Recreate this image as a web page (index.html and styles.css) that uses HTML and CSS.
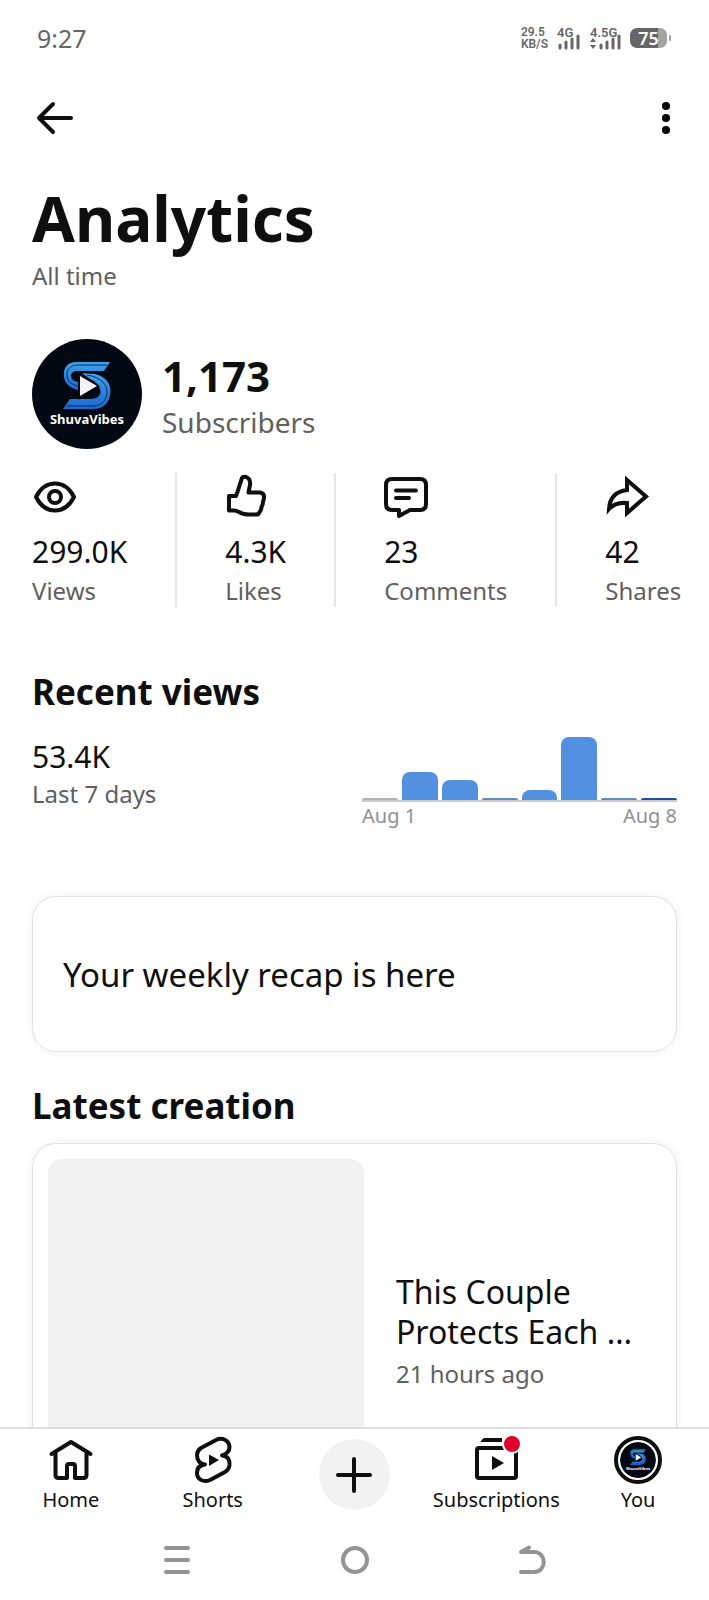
FILE: index.html
```html
<!DOCTYPE html>
<html lang="en">
<head>
	<meta charset="utf-8">
	<meta name="viewport" content="width=device-width, initial-scale=1">
	<title>Analytics</title>
	<link rel="stylesheet" href="styles.css">
</head>
<body>
	<!-- channel logo, used in the header and in the bottom bar -->
	<svg class="defs" width="0" height="0" aria-hidden="true">
		<defs>
			<linearGradient id="blue" x1="0" y1="0" x2="0" y2="1">
				<stop offset="0" stop-color="#3fa3ea"/>
				<stop offset="1" stop-color="#1c66d0"/>
			</linearGradient>
			<symbol id="logo" viewBox="0 0 110 110">
				<circle cx="55" cy="55" r="55" fill="#020912"/>
				<path d="M78 23H45C35 23 31 29 32 38C33 45 38 49 46 51V43C41 42 39 40 39 37C39 34 41 32 45 32H72Z" fill="url(#blue)"/>
				<path d="M50 34L63 35C75 38 80 46 78 56C76 66 70 70 61 70H31L38 60H58C66 60 70 56 68 50C67 46 63 42 58 40Z" fill="url(#blue)"/>
				<path d="M75 26H46C38 26 34 31 35 37C36 43 39 45 46 47M55 36C69 38 76 46 75 55C73 64 68 67 60 67H35" fill="none" stroke="#0a2c60" stroke-width="1"/>
				<path d="M46 34L68 47L46 61Z" fill="#020912"/>
				<path d="M48 37V57L65 47Z" fill="#f1f3f6"/>
				<text class="logo-text" x="55" y="85" text-anchor="middle">ShuvaVibes</text>
			</symbol>
		</defs>
	</svg>

	<div class="screen">
		<div class="status">
			<span class="time">9:27</span>
			<div class="status-right">
				<div class="speed"><span>29.5</span><span>KB/S</span></div>
				<div class="signal">
					<span>4G</span>
					<svg width="24" height="16" viewBox="0 0 24 16"><path d="M3 11V14M9 8V14M15 5V14M21 2V14" /></svg>
				</div>
				<div class="signal">
					<span>4.5G</span>
					<svg width="31" height="16" viewBox="0 0 31 16"><path d="M11 11V14M17 8V14M23 5V14M29 2V14"/><path class="solid" d="M0 8L3 4L6 8ZM0 11L3 15L6 11Z"/></svg>
				</div>
				<div class="battery"><span>75</span></div>
			</div>
		</div>

		<header class="topbar">
			<button type="button" aria-label="Back">
				<svg class="icon" width="44" height="44" viewBox="0 0 44 44"><path d="M21 8L7 22L21 36M7 22H39"/></svg>
			</button>
			<button type="button" aria-label="More">
				<svg width="10" height="34" viewBox="0 0 10 34"><circle cx="5" cy="5" r="4"/><circle cx="5" cy="17" r="4"/><circle cx="5" cy="29" r="4"/></svg>
			</button>
		</header>

		<main>
			<h1>Analytics</h1>
			<p class="label period">All time</p>

			<section class="channel">
				<svg class="avatar" role="img" aria-label="ShuvaVibes"><use href="#logo"/></svg>
				<div>
					<p class="subs">1,173</p>
					<p class="subs-label">Subscribers</p>
				</div>
			</section>

			<section class="stats">
				<div class="stat">
					<svg class="icon" width="44" height="44" viewBox="0 0 44 44"><path d="M4 22C13 4 33 4 42 22C33 40 13 40 4 22Z"/><circle cx="23" cy="22" r="6"/></svg>
					<p class="value">299.0K</p>
					<p class="label">Views</p>
				</div>
				<div class="stat">
					<svg class="icon" width="44" height="44" viewBox="0 0 44 44"><path d="M4 21H11Q13 16 15 9L17 3Q18 1 21 2Q26 4 25 10L23.500 17.500H35Q39.500 18 39 23Q38.500 25 38 27Q38 30 36.500 32Q36.500 35 34 38Q33.500 39.500 31 39.500H24Q18 39.500 14 37Q11 35.500 9 35.500H4Z"/></svg>
					<p class="value">4.3K</p>
					<p class="label">Likes</p>
				</div>
				<div class="stat">
					<svg class="icon" width="44" height="44" viewBox="0 0 44 44"><path d="M8 4H36Q42 4 42 10V29Q42 35 36 35H26L15 41V35H8Q2 35 2 29V10Q2 4 8 4ZM12 15.500H32M12 23H25"/></svg>
					<p class="value">23</p>
					<p class="label">Comments</p>
				</div>
				<div class="stat">
					<svg class="icon miter" width="44" height="44" viewBox="0 0 44 44"><path d="M22 5L41 21.500L22 38V28Q10 27 4 34Q5 17 22 15Z"/></svg>
					<p class="value">42</p>
					<p class="label">Shares</p>
				</div>
			</section>

			<h2>Recent views</h2>
			<section class="recent">
				<div>
					<p class="value">53.4K</p>
					<p class="label">Last 7 days</p>
				</div>
				<div class="chart">
					<div class="bars">
						<span class="bar grey" style="height: 2px"></span>
						<span class="bar" style="height: 28px"></span>
						<span class="bar" style="height: 20px"></span>
						<span class="bar low" style="height: 2px"></span>
						<span class="bar" style="height: 10px"></span>
						<span class="bar" style="height: 63px"></span>
						<span class="bar low" style="height: 2px"></span>
						<span class="bar today" style="height: 2px"></span>
					</div>
					<div class="dates"><span>Aug 1</span><span>Aug 8</span></div>
				</div>
			</section>

			<a class="card recap" href="#recap">Your weekly recap is here</a>

			<h2>Latest creation</h2>
			<a class="card video" href="#video">
				<span class="thumb"></span>
				<span class="video-info">
					<span class="video-title">This Couple Protects Each …</span>
					<span class="label">21 hours ago</span>
				</span>
			</a>
		</main>

		<nav class="tabs">
			<a href="#home">
				<span class="slot"><svg class="icon" width="44" height="44" viewBox="0 0 44 44"><path d="M2.500 16L22 4L41.500 16M6.500 14V37Q6.500 40 9.500 40H18V28Q18 26 20 26H24Q26 26 26 28V40H34.500Q37.500 40 37.500 37V14"/></svg></span>
				Home
			</a>
			<a href="#shorts">
				<span class="slot"><svg class="icon" width="44" height="44" viewBox="0 0 44 44"><path d="M10 10L25 2C31 -1 38 2 38.500 9C38.500 13 36 16 31 17.500C37 18 39 22 38.500 27C38 31 36 33 34 34L19 42C12 45 6 41 6 35C6 30 9 27 14 26.500C8 26 6 21 6 17C6 14 7 12 10 10Z"/><path class="solid" d="M18 16.500V28L28 22Z"/></svg></span>
				Shorts
			</a>
			<button class="create" type="button" aria-label="Create">
				<svg class="icon" width="44" height="44" viewBox="0 0 44 44"><path d="M22 6V38M6 22H38"/></svg>
			</button>
			<a href="#subscriptions">
				<span class="slot"><svg class="icon" width="44" height="44" viewBox="0 0 44 44"><rect x="3" y="10" width="39" height="30" rx="2"/><path class="solid" d="M18 18V32L30 25Z"/><path class="solid" d="M10 0H28V4H6.500Q8 1 10 0Z"/></svg><i class="dot"></i></span>
				Subscriptions
			</a>
			<a href="#you">
				<span class="slot"><svg class="me"><use href="#logo"/></svg></span>
				You
			</a>
		</nav>

		<div class="system">
			<button type="button" aria-label="Recent apps"><svg width="28" height="30" viewBox="0 0 28 30"><path d="M3 3H25M3 15H25M3 27H25"/></svg></button>
			<button type="button" aria-label="Home screen"><svg width="28" height="30" viewBox="0 0 28 30"><circle cx="14" cy="15" r="12"/></svg></button>
			<button type="button" aria-label="Go back"><svg width="28" height="30" viewBox="0 0 28 30"><path d="M3 27H16C29 27 29 7 16 7H3L11 2.500"/></svg></button>
		</div>
	</div>
</body>
</html>
```
FILE: styles.css
```css
*{
	box-sizing: border-box;
	padding: 0;
	margin: 0;
}
body{
	background-color: #fff;
	color: #0f0f0f;
	font-family: "Noto Sans", sans-serif;
}
button{
	display: flex;
	align-items: center;
	justify-content: center;
	background: none;
	border: none;
	cursor: pointer;
}
a{
	color: inherit;
	text-decoration: none;
}
.defs{
	position: absolute;
}
.screen{
	display: flex;
	flex-direction: column;
	height: 100vh;
	overflow: hidden;
}

/* status bar */
.status{
	display: flex;
	justify-content: space-between;
	align-items: center;
	height: 76px;
	padding: 0 42px 0 37px;
	color: #666;
}
.time{
	font-size: 25px;
}
.status-right{
	display: flex;
	align-items: center;
	gap: 9px;
	font-size: 13px;
	font-weight: 600;
	line-height: 11px;
}
.speed{
	display: flex;
	flex-direction: column;
	gap: 1px;
	font-family: Roboto, sans-serif;
	font-size: 12px;
}
.signal{
	display: flex;
	flex-direction: column;
	font-family: Roboto, sans-serif;
}
.signal svg{
	align-self: flex-end;
	margin-top: -4px;
	fill: none;
	stroke: #666;
	stroke-width: 3;
	stroke-linecap: round;
}
.signal .solid{
	fill: #666;
	stroke: none;
}
.battery{
	position: relative;
	display: flex;
	align-items: center;
	justify-content: center;
	width: 37px;
	height: 20px;
	border-radius: 7px;
	background: linear-gradient(90deg, #666 75%, #a3a3a3 75%);
	color: #fff;
	font-size: 18px;
}
.battery::after{
	content: "";
	position: absolute;
	right: -4px;
	width: 2px;
	height: 6px;
	border-radius: 1px;
	background-color: #a3a3a3;
}

/* icons */
.icon{
	display: block;
	overflow: visible;
	fill: none;
	stroke: #0f0f0f;
	stroke-width: 4;
	stroke-linecap: round;
	stroke-linejoin: round;
}
.miter{
	stroke-linejoin: miter;
}
.icon .solid{
	fill: #0f0f0f;
	stroke: none;
}
.logo-text{
	fill: #fff;
	font-family: "Noto Sans", sans-serif;
	font-size: 13px;
	font-weight: 700;
}

.topbar{
	display: flex;
	justify-content: space-between;
	align-items: center;
	height: 84px;
	padding: 0 38px 0 32px;
}

/* page */
main{
	flex: 1;
	min-height: 0;
	overflow: hidden;
	padding: 22px 32px 0;
}
h1{
	font-size: 62px;
	line-height: 72px;
}
h2{
	font-size: 35px;
	line-height: 40px;
}
.label{
	color: #606060;
	font-size: 24px;
	line-height: 32px;
}
.value{
	font-size: 30px;
	line-height: 42px;
}
.period{
	margin-top: 6px;
}
.channel{
	display: flex;
	align-items: center;
	gap: 20px;
	margin-top: 47px;
}
.avatar{
	width: 110px;
	height: 110px;
}
.subs{
	font-size: 42px;
	font-weight: 700;
	line-height: 56px;
}
.subs-label{
	color: #606060;
	font-size: 28px;
	line-height: 36px;
}
.stats{
	display: flex;
	margin: 24px 0 65px;
}
.stat{
	padding: 2px 48px 0;
	border-right: 2px solid #e5e5e5;
}
.stat:first-child{
	padding-left: 0;
}
.stat:last-child{
	padding-right: 0;
	border-right: none;
}
.stat .value{
	margin: 12px 0 2px;
}

.recent{
	display: flex;
	justify-content: space-between;
	margin: 24px 0 66px;
}
.chart{
	flex: 0 1 315px;
}
.bars{
	display: flex;
	align-items: flex-end;
	gap: 4px;
	height: 66px;
	border-bottom: 2px solid #ccc;
}
.bar{
	flex: 1;
	border-radius: 8px 8px 0 0;
	background-color: #5290e0;
}
.grey{
	background-color: #b3b3b3;
}
.low{
	background-color: #6488c0;
}
.today{
	background-color: #1f4f9e;
}
.dates{
	display: flex;
	justify-content: space-between;
	color: #909090;
	font-size: 20px;
	line-height: 28px;
}

.card{
	display: flex;
	align-items: center;
	border: 1px solid #e2e2e2;
	border-radius: 24px;
	box-shadow: 0 0 12px rgba(0, 0, 0, 0.06);
}
.recap{
	height: 156px;
	margin-bottom: 34px;
	padding: 0 30px;
	font-size: 33px;
}
.video{
	gap: 32px;
	margin-top: 17px;
	padding: 15px;
}
.thumb{
	flex: 0 0 316px;
	height: 344px;
	border-radius: 14px;
	background-color: #f1f1f1;
}
.video-info{
	display: flex;
	flex-direction: column;
	gap: 6px;
}
.video-title{
	font-size: 32px;
	line-height: 40px;
}

/* bottom bars */
.tabs{
	display: grid;
	grid-template-columns: repeat(5, 1fr);
	height: 93px;
	padding-top: 7px;
	border-top: 2px solid #dedede;
	background-color: #fff;
}
.tabs a{
	display: flex;
	flex-direction: column;
	align-items: center;
	gap: 4px;
	font-size: 20px;
	line-height: 24px;
}
.slot{
	position: relative;
	display: flex;
	align-items: center;
	height: 48px;
}
.dot{
	position: absolute;
	top: -2px;
	right: -4px;
	width: 20px;
	height: 20px;
	border: 2px solid #fff;
	border-radius: 50%;
	background-color: #e1002d;
}
.me{
	width: 48px;
	height: 48px;
	padding: 2px;
	border: 4px solid #0f0f0f;
	border-radius: 50%;
}
.create{
	align-self: start;
	justify-self: center;
	width: 71px;
	height: 71px;
	margin-top: 3px;
	border-radius: 50%;
	background-color: #f2f2f2;
}
.system{
	display: grid;
	grid-template-columns: repeat(3, 1fr);
	height: 80px;
	padding: 0 12.5%;
}
.system svg{
	fill: none;
	stroke: #949494;
	stroke-width: 4;
	stroke-linecap: round;
	stroke-linejoin: round;
}
```
